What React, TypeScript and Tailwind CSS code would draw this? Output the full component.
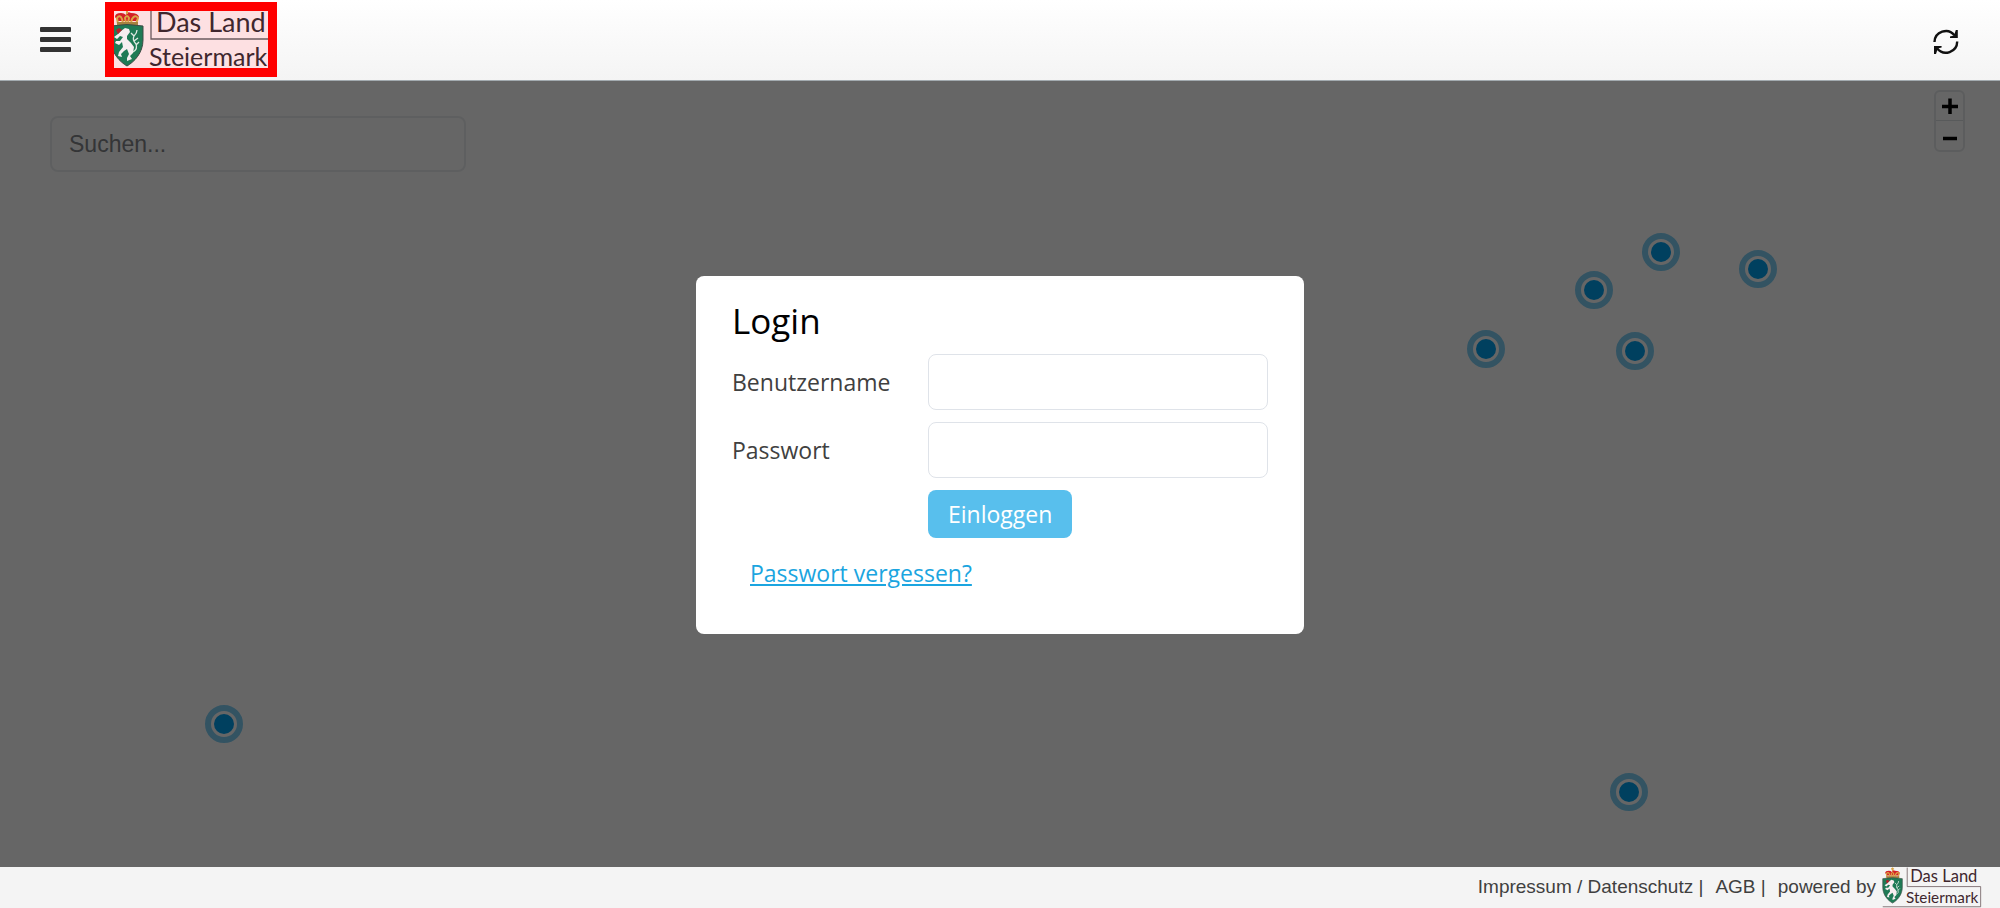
interface LogoProps {
  viewBox: string
  className?: string
}

interface MapPin {
  x: number
  y: number
}

// positions in percent of the map area
const pins: MapPin[] = [
  { x: 83.05, y: 21.7 },
  { x: 87.9, y: 23.86 },
  { x: 79.7, y: 26.65 },
  { x: 74.3, y: 34.16 },
  { x: 81.75, y: 34.29 },
  { x: 11.2, y: 81.87 },
  { x: 81.45, y: 90.46 },
]

function Logo({ viewBox, className }: LogoProps) {
  return (
    <svg viewBox={viewBox} className={className} role="img" aria-label="Das Land Steiermark">
      {/* crown */}
      <path d="M1 6Q1 2 7 2Q10 2 12 4Q13 0 17 2Q24 2 25 6L22 10H4Z" fill="#d41f26" />
      <path
        d="M4 13L3 7Q6 3 8 8L9 12M12 12L11 7Q13 3 15 7L14 12M17 12L18 8Q21 3 24 7L22 13M13 -3V3M10.5 -1H15.5"
        fill="none"
        stroke="#d9a445"
        strokeWidth="2"
      />
      <path d="M3 11H24V14H3Z" fill="#a8823f" />
      {/* shield with the panther */}
      <path
        d="M-3 15Q13 12 29 15V29C29 42 20 51 13 55C6 51 -3 42 -3 29Z"
        fill="#1f7a55"
        stroke="#3c4a44"
        strokeWidth="1"
      />
      <path
        d="M7 20L11 17L15 18L16 21L13 25L13 28L17 32L20 36L19 42L16 45L18 48L13 50L13 47L15 43L13 38L10 40L7 43L8 46L4 45L5 41L9 36L8 31L5 34L1 32L2 30L6 30L9 26L6 25L3 28L0 26L4 23Z"
        fill="#f7eef0"
      />
      <path
        d="M19 41Q24 38 22 33Q18 29 20 25Q23 22 23 19M20 25L17 22M20 30L24 27M22 34L25 31"
        fill="none"
        stroke="#dfe9e3"
        strokeWidth="1.3"
      />
      <path d="M2 19L5 17L8 19L4 23Z" fill="#b3202a" />
      {/* lettering and rules */}
      <path d="M37 -3V28H157V61H-3" fill="none" stroke="#6b5a5e" strokeWidth="1.3" />
      <text x="42" y="21" fontSize="27" fill="#40272e" fontFamily="Lato, sans-serif">Das Land</text>
      <text x="35" y="55" fontSize="25" fill="#40272e" fontFamily="Lato, sans-serif">Steiermark</text>
    </svg>
  )
}

function Header() {
  return (
    <header className="flex h-[81px] items-center justify-between border-b border-[#a3abb0] bg-linear-to-b from-white to-[#f4f4f4] px-10 pb-px">
      <div className="flex items-center gap-[34px]">
        <button type="button" aria-label="Menü" className="block">
          <svg viewBox="0 0 31 26" className="h-[26px] w-[31px]" fill="#333">
            <rect y="0" width="31" height="5" rx="1" />
            <rect y="10" width="31" height="5" rx="1" />
            <rect y="20" width="31" height="5" rx="1" />
          </svg>
        </button>
        <a href="#" className="relative block bg-[#fde0e2]">
          <Logo viewBox="-9 -9 172 75" className="block h-[75px] w-[172px]" />
          <span className="absolute inset-0 border-[9px] border-[#ff0000]" />
        </a>
      </div>
      <button type="button" aria-label="Aktualisieren" className="mt-1 block">
        <svg viewBox="0 0 28 28" className="size-7">
          <path
            d="M2.5 14A11.3 11.3 0 0 1 22.5 7.2M25.2 13.5A11.3 11.3 0 0 1 5.2 20.6"
            fill="none"
            stroke="#111"
            strokeWidth="2.4"
          />
          <path d="M25.8 2V10H18V8.6L22 7.6L23.8 2ZM2 26V18H9.6V19.4L5.8 20.4L4 26Z" fill="#111" />
        </svg>
      </button>
    </header>
  )
}

function MapView() {
  return (
    <div className="absolute inset-0 bg-white">
      {pins.map((pin) => (
        <span
          key={`${pin.x}-${pin.y}`}
          className="absolute flex size-[38px] -translate-x-1/2 -translate-y-1/2 items-center justify-center rounded-full border-6 border-[#80d0f6]"
          style={{ left: `${pin.x}%`, top: `${pin.y}%` }}
        >
          <span className="size-5 rounded-full bg-[#00a0ee]" />
        </span>
      ))}
      <div className="flex items-start justify-between pt-[9px] pr-[35px] pl-[50px]">
        <input
          type="search"
          aria-label="Suchen"
          placeholder="Suchen..."
          className="mt-[26px] h-14 w-[416px] rounded-lg border-2 border-[#eceef0] px-[17px] text-[23px] placeholder:text-[#828689]"
        />
        <div className="flex flex-col rounded-md border-2 border-[#e6e8ea]">
          <button type="button" aria-label="Vergrößern" className="flex h-[29px] w-[27px] items-center justify-center border-b border-[#dde0e4]">
            <svg viewBox="0 0 16 16" className="size-4">
              <path d="M8 0.5V16M0 8.5H16" stroke="#000" strokeWidth="3.5" />
            </svg>
          </button>
          <button type="button" aria-label="Verkleinern" className="flex h-[29px] w-[27px] items-center justify-center pt-1">
            <svg viewBox="0 0 16 16" className="size-4">
              <path d="M1 8.5H15" stroke="#000" strokeWidth="3.5" />
            </svg>
          </button>
        </div>
      </div>
    </div>
  )
}

function LoginDialog() {
  return (
    <form
      role="dialog"
      aria-labelledby="login-title"
      className="w-[608px] rounded-lg bg-white px-9 pt-5 pb-11 font-['Open_Sans',sans-serif] text-[23px] leading-[34px] text-[#404040]"
      onSubmit={(e) => e.preventDefault()}
    >
      <h2 id="login-title" className="mb-2 text-[35px] leading-[50px] text-black">Login</h2>
      <div className="grid grid-cols-[196px_1fr] items-center gap-y-3">
        <label htmlFor="username">Benutzername</label>
        <input id="username" type="text" className="h-14 w-full rounded-lg border border-[#dfe3e9] px-5" />
        <label htmlFor="password">Passwort</label>
        <input id="password" type="password" className="h-14 w-full rounded-lg border border-[#dfe3e9] px-5" />
        <button type="submit" className="col-start-2 h-12 justify-self-start rounded-lg bg-[#58bfed] px-5 text-white">
          Einloggen
        </button>
      </div>
      <a href="#" className="mt-[18px] ml-[18px] block w-fit text-[#1ba5e0] underline">Passwort vergessen?</a>
    </form>
  )
}

function Footer() {
  return (
    <footer className="flex h-[41px] items-center justify-end bg-[#f4f4f4] pr-[18px] text-[19px] text-[#404040]">
      <nav className="flex items-center gap-3">
        <span><a href="#">Impressum / Datenschutz</a> |</span>
        <span><a href="#">AGB</a> |</span>
        <span>powered by</span>
      </nav>
      <Logo viewBox="-4 -4 163 67" className="ml-1.5 h-[41px] w-[100px]" />
    </footer>
  )
}

export default function App() {
  return (
    <div className="flex h-screen flex-col font-['Liberation_Sans',Arial,sans-serif]">
      <Header />
      <main className="relative flex-1">
        <MapView />
        <div className="absolute inset-0 flex items-center justify-center bg-black/60 pb-[38px]">
          <LoginDialog />
        </div>
      </main>
      <Footer />
    </div>
  )
}
